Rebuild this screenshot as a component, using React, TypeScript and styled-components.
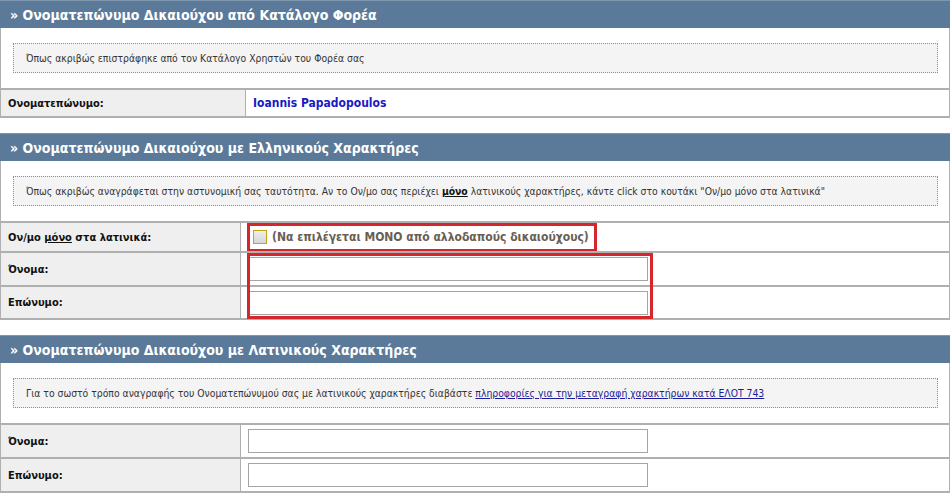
import React from 'react';
import styled, {createGlobalStyle} from "styled-components";

const GlobalStyle = createGlobalStyle`
  body{
    margin: 0;
    background: #ffffff;
    font-family: "DejaVu Sans Condensed", "DejaVu Sans", Verdana, sans-serif;
    font-stretch: condensed;
  }
`
const Page = styled.div`
  width: 950px;
  display: flex;
  flex-direction: column;
  gap: 15px;
`
const Section = styled.div`
  display: flex;
  flex-direction: column;
  border-left: 1px solid #b0b0b0;
  border-right: 1px solid #b0b0b0;
  border-bottom: 2px solid #b0b0b0;
`
const Header = styled.div`
  height: 28px;
  line-height: 28px;
  padding-left: 10px;
  background: #5b7a99;
  border-top: 1px solid #7f97ae;
  margin: 0 -1px;
  color: #ffffff;
  font-weight: bold;
  font-size: 14px;
  box-sizing: border-box;
`
const InfoWrap = styled.div`
  padding: 15px 11px 15px 12px;
`
const InfoBox = styled.div`
  height: 30px;
  box-sizing: border-box;
  line-height: 28px;
  padding-left: 12px;
  background: #f4f4f4;
  border: 1px dotted #8e8e8e;
  color: #333333;
  font-size: 10.3px;
  white-space: nowrap;
  b{
    color: #111;
    text-decoration: underline;
  }
  a{
    color: #1c1c9c;
    text-decoration: underline;
  }
`
const Table = styled.div<{label:number}>`
  position: relative;
  display: grid;
  grid-template-columns: ${props => props.label}px 1fr;
`
const Label = styled.div<{h:number}>`
  height: ${props => props.h}px;
  display: flex;
  align-items: center;
  padding-left: 7px;
  background: #efefef;
  border-top: 2px solid #b0b0b0;
  border-right: 1px solid #b0b0b0;
  font-size: 11px;
  font-weight: bold;
  color: #111111;
  u{
    text-decoration: underline;
  }
`
const Value = styled.div<{h:number}>`
  height: ${props => props.h}px;
  display: flex;
  align-items: center;
  padding-left: 7px;
  border-top: 2px solid #b0b0b0;
  background: #ffffff;
`
const Name = styled.span`
  color: #1a1ac4;
  font-weight: bold;
  font-size: 12px;
`
const TextInput = styled.input`
  width: 400px;
  height: 24px;
  box-sizing: border-box;
  border: 1px solid #a5a5a5;
  background: #ffffff;
  font-size: 12px;
  margin: 0;
`
const CheckLine = styled.label`
  display: flex;
  align-items: center;
  gap: 5px;
  height: 29px;
  box-sizing: border-box;
  padding: 0 5px 0 3px;
  margin-left: -1px;
  border: 3px solid #d5262e;
  font-size: 12px;
  font-weight: bold;
  color: #6a5e52;
`
const Box = styled.span`
  width: 12px;
  height: 12px;
  border: 1px solid #c5a513;
  background: linear-gradient(#eeeeee, #d6d6d6);
`
const Highlight = styled.div`
  position: absolute;
  left: 246px;
  top: 32px;
  width: 406px;
  height: 66px;
  box-sizing: border-box;
  border: 3px solid #d5262e;
  pointer-events: none;
`

const Row:React.FC<{label:React.ReactNode,h:number,children?:React.ReactNode}> = ({label,h,children}) => (
    <>
        <Label h={h}>{label}</Label>
        <Value h={h}>{children}</Value>
    </>
)

const App = () => {
    return (
        <Page>
            <GlobalStyle/>
            <Section>
                <Header>» Ονοματεπώνυμο Δικαιούχου από Κατάλογο Φορέα</Header>
                <InfoWrap>
                    <InfoBox>Όπως ακριβώς επιστράφηκε από τον Κατάλογο Χρηστών του Φορέα σας</InfoBox>
                </InfoWrap>
                <Table label={245}>
                    <Row label="Ονοματεπώνυμο:" h={26}><Name>Ioannis Papadopoulos</Name></Row>
                </Table>
            </Section>
            <Section>
                <Header>» Ονοματεπώνυμο Δικαιούχου με Ελληνικούς Χαρακτήρες</Header>
                <InfoWrap>
                    <InfoBox>Όπως ακριβώς αναγράφεται στην αστυνομική σας ταυτότητα. Αν το Ον/μο σας περιέχει <b>μόνο</b> λατινικούς χαρακτήρες, κάντε click στο κουτάκι "Ον/μο μόνο στα λατινικά"</InfoBox>
                </InfoWrap>
                <Table label={240}>
                    <Row label={<span>Ον/μο <u>μόνο</u> στα λατινικά:</span>} h={28}>
                        <CheckLine><Box/>(Να επιλέγεται ΜΟΝΟ από αλλοδαπούς δικαιούχους)</CheckLine>
                    </Row>
                    <Row label="Όνομα:" h={32}><TextInput type="text"/></Row>
                    <Row label="Επώνυμο:" h={31}><TextInput type="text"/></Row>
                    <Highlight/>
                </Table>
            </Section>
            <Section>
                <Header>» Ονοματεπώνυμο Δικαιούχου με Λατινικούς Χαρακτήρες</Header>
                <InfoWrap>
                    <InfoBox>Για το σωστό τρόπο αναγραφής του Ονοματεπώνυμού σας με λατινικούς χαρακτήρες διαβάστε <a href="#">πληροφορίες για την μεταγραφή χαρακτήρων κατά ΕΛΟΤ 743</a></InfoBox>
                </InfoWrap>
                <Table label={240}>
                    <Row label="Όνομα:" h={32}><TextInput type="text"/></Row>
                    <Row label="Επώνυμο:" h={32}><TextInput type="text"/></Row>
                </Table>
            </Section>
        </Page>
    );
};

export default App;
